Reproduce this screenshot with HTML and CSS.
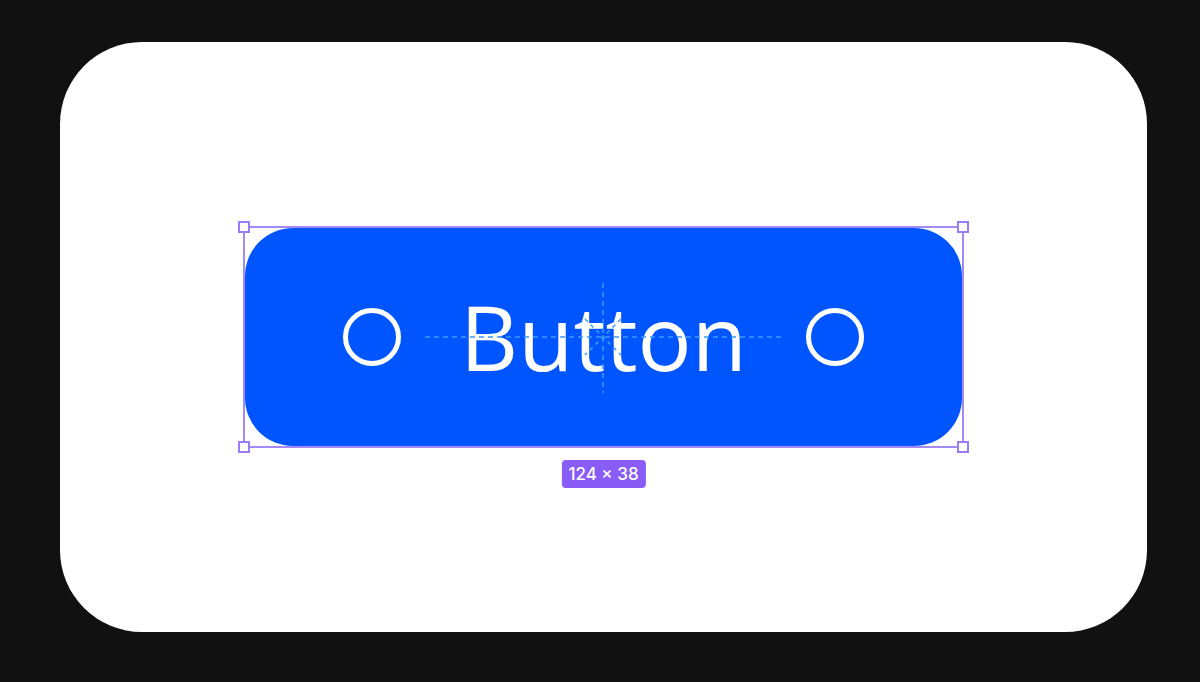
FILE: index.html
```html
<!DOCTYPE html>
<html lang="en">
<head>
    <meta charset="UTF-8">
    <title>Button</title>
    <link rel="stylesheet" href="styles.css">
</head>
<body>

<div class="card">
    <div class="selection">
        <div class="btn">
            <span class="ring"></span>
            <span class="label">Button</span>
            <span class="ring"></span>

            <!-- centre guides -->
            <svg class="guides" width="717" height="218" viewBox="0 0 717 218">
                <g stroke="#3d9bff" stroke-width="1.5" fill="none" stroke-dasharray="5 4">
                    <line x1="180" y1="109" x2="540" y2="109"/>
                    <line x1="358" y1="55" x2="358" y2="165"/>
                </g>
                <g stroke="#3d9bff" stroke-width="1.5" fill="none" stroke-dasharray="4 4">
                    <line x1="340" y1="91" x2="376" y2="127"/>
                    <line x1="376" y1="91" x2="340" y2="127"/>
                </g>
            </svg>
        </div>
        <span class="handle tl"></span>
        <span class="handle tr"></span>
        <span class="handle bl"></span>
        <span class="handle br"></span>
        <div class="size-tag">124 × 38</div>
    </div>
</div>

</body>
</html>
```

FILE: styles.css
```css
html, body {
    margin: 0;
    height: 100%;
}
body {
    background-color: #111111;
    padding: 42px 53px 50px 60px;
    box-sizing: border-box;
    font-family: "Open Sans", "Noto Sans", sans-serif;
}
.card {
    background-color: #fff;
    height: 590px;
    width: 1087px;
    border-radius: 82px;
    display: flex;
    align-items: center;
    justify-content: center;
}
.selection {
    position: relative;
    outline: 2px solid #a48af7;
    outline-offset: 0;
}
.btn {
    position: relative;
    width: 717px;
    height: 218px;
    background-color: #0055ff;
    border-radius: 48px;
    display: flex;
    align-items: center;
    justify-content: center;
    gap: 59px;
    color: #fff;
}
.ring {
    width: 48px;
    height: 48px;
    border: 5px solid #fff;
    border-radius: 50%;
}
.label {
    font-size: 90px;
    line-height: 1;
    margin-top: -2px;
}
.guides {
    position: absolute;
    left: 0;
    top: 0;
}
.handle {
    position: absolute;
    width: 8px;
    height: 8px;
    background: #fff;
    border: 2px solid #9a7cf7;
}
.handle.tl { left: -7px; top: -7px; }
.handle.tr { right: -7px; top: -7px; }
.handle.bl { left: -7px; bottom: -7px; }
.handle.br { right: -7px; bottom: -7px; }
.size-tag {
    position: absolute;
    top: 232px;
    left: 50%;
    transform: translateX(-50%);
    background-color: #8a5cf6;
    color: #fff;
    font-family: Inter, sans-serif;
    font-size: 17px;
    font-weight: 500;
    line-height: 28px;
    padding: 0 7px;
    border-radius: 4px;
    white-space: nowrap;
}
```
